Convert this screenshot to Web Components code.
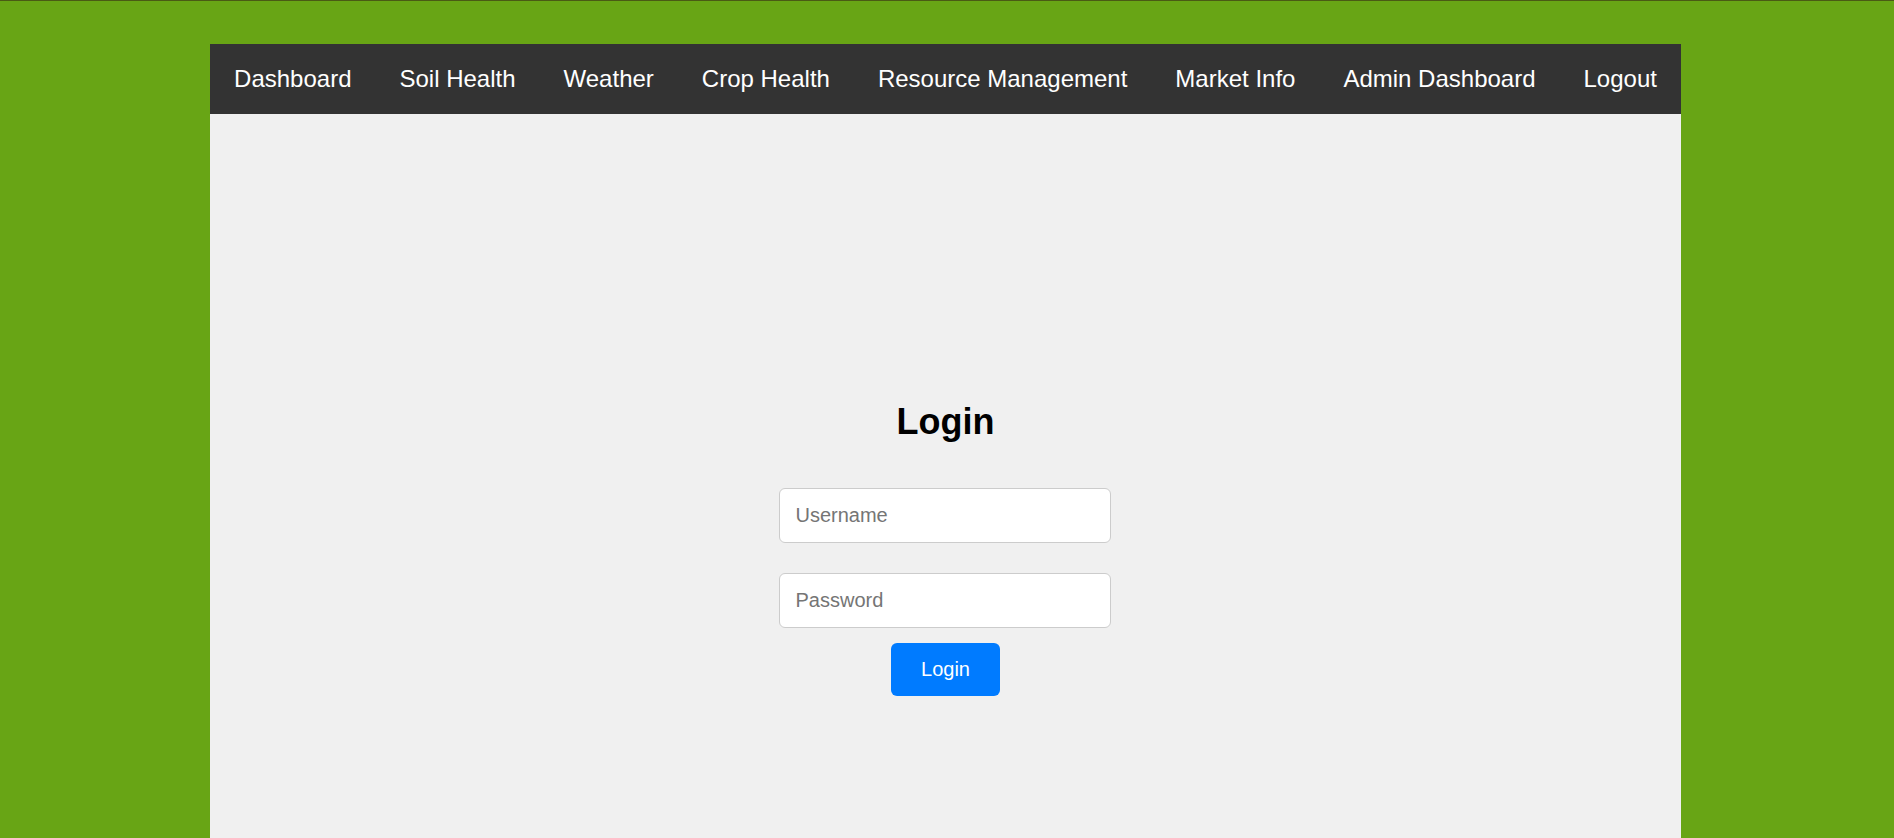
<!DOCTYPE html>
<html lang="en">
<head>
<meta charset="utf-8">
<title>Login</title>
<style>
body { margin: 0; font-family: Arial, "Liberation Sans", sans-serif; background: #68a515; }
</style>
</head>
<body>
<farm-app></farm-app>
<script>
class NavBar extends HTMLElement {
  constructor() {
    super();
    this.attachShadow({ mode: "open" }).innerHTML = `
      <style>
        :host { display: block; background: #333; }
        nav { display: flex; flex-wrap: wrap; }
      </style>
      <nav aria-label="Main"><slot></slot></nav>`;
  }
}
customElements.define("nav-bar", NavBar);

class NavItem extends HTMLElement {
  constructor() {
    super();
    this.attachShadow({ mode: "open" }).innerHTML = `
      <style>
        :host { display: block; }
        a { display: block; padding: 21px 24px; font-size: 24px; line-height: 28px; color: #fff; text-decoration: none; white-space: nowrap; }
      </style>
      <a href="#"><slot></slot></a>`;
  }
}
customElements.define("nav-item", NavItem);

class LoginForm extends HTMLElement {
  constructor() {
    super();
    this.attachShadow({ mode: "open" }).innerHTML = `
      <style>
        :host { display: block; text-align: center; }
        h2 { margin: 0 0 44px; font-size: 36px; line-height: 44px; }
        form { display: flex; flex-direction: column; align-items: center; }
        input { box-sizing: border-box; width: 332px; height: 55px; margin: 0 0 30px; padding: 0 15px; border: 1px solid #ccc; border-radius: 6px; background: #fff; font: 20px Arial, "Liberation Sans", sans-serif; }
        input[type="password"] { margin-bottom: 15px; }
        input::placeholder { color: #757575; }
        button { padding: 15px 30px; border: 0; border-radius: 6px; background: #007bff; color: #fff; font: 20px/23px Arial, "Liberation Sans", sans-serif; }
      </style>
      <h2>Login</h2>
      <form>
        <input type="text" placeholder="Username" aria-label="Username">
        <input type="password" placeholder="Password" aria-label="Password">
        <button type="button">Login</button>
      </form>`;
  }
}
customElements.define("login-form", LoginForm);

class FarmApp extends HTMLElement {
  constructor() {
    super();
    this.attachShadow({ mode: "open" }).innerHTML = `
      <style>
        :host { display: flex; flex-direction: column; align-items: center; box-sizing: border-box; min-height: 100vh; padding: 43px 3px 0 0; border-top: 1px solid #4a5a14; }
        .panel { display: flex; flex-direction: column; flex: 1; background: #f0f0f0; }
        main { flex: 1; display: flex; justify-content: center; padding-top: 286px; }
      </style>
      <div class="panel">
        <nav-bar>
          <nav-item>Dashboard</nav-item><nav-item>Soil Health</nav-item><nav-item>Weather</nav-item><nav-item>Crop Health</nav-item><nav-item>Resource Management</nav-item><nav-item>Market Info</nav-item><nav-item>Admin Dashboard</nav-item><nav-item>Logout</nav-item>
        </nav-bar>
        <main><login-form></login-form></main>
      </div>`;
  }
}
customElements.define("farm-app", FarmApp);
</script>
</body>
</html>
